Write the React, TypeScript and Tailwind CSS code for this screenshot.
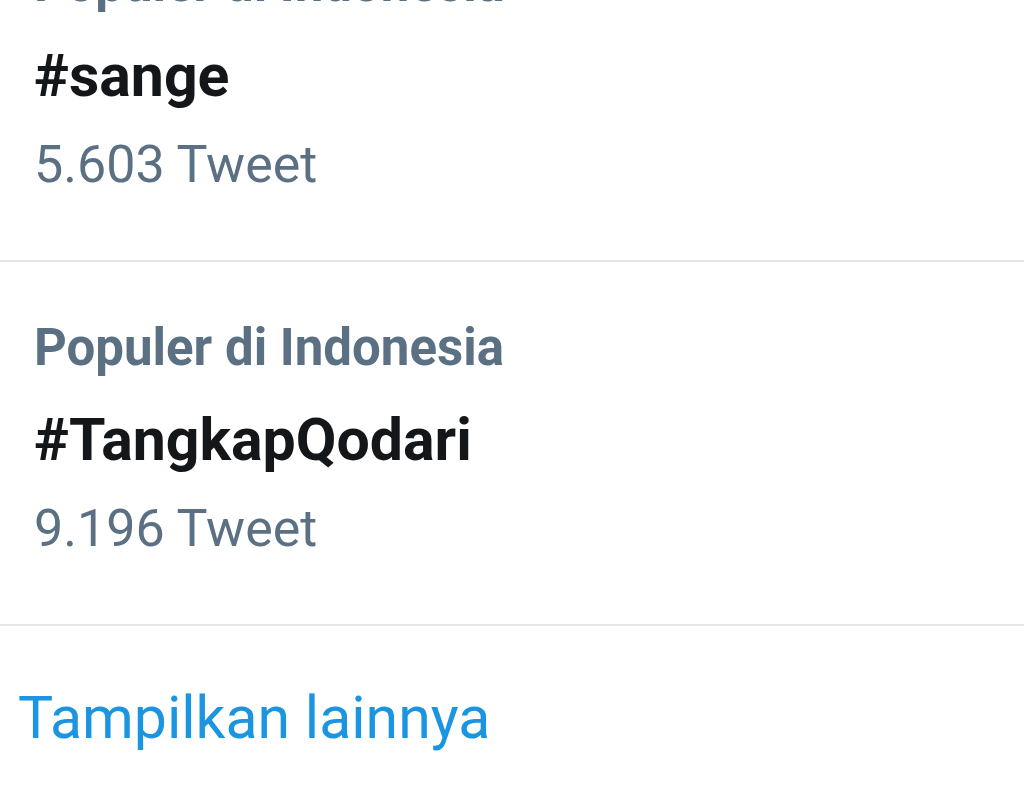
const trends = [
  { place: "Populer di Indonesia", tag: "#sange", count: "5.603 Tweet" },
  { place: "Populer di Indonesia", tag: "#TangkapQodari", count: "9.196 Tweet" },
];

function TrendItem({ place, tag, count }: { place: string; tag: string; count: string }) {
  return (
    <div className="border-b-2 border-[#e3e5e7] px-[34px] pt-[54px] pb-[64px]">
      <div className="h-[64px] text-[51px] leading-[64px] font-bold text-[#5b7083]">{place}</div>
      <div className="mt-[25px] h-[70px] text-[59px] leading-[70px] font-bold text-[#14171a]">{tag}</div>
      <div className="mt-[23px] h-[62px] text-[52px] leading-[62px] text-[#5b7083]">{count}</div>
    </div>
  );
}

export default function App() {
  return (
    <div className="h-[789px] w-[1024px] overflow-hidden bg-white font-['Roboto',sans-serif]">
      <div className="-mt-[102px]">
        {trends.map((t) => (
          <TrendItem key={t.tag} {...t} />
        ))}
        <div className="px-[18px] pt-[57px]">
          <a className="block h-[70px] text-[59px] leading-[70px] text-[#1b95e0]">Tampilkan lainnya</a>
        </div>
      </div>
    </div>
  );
}
